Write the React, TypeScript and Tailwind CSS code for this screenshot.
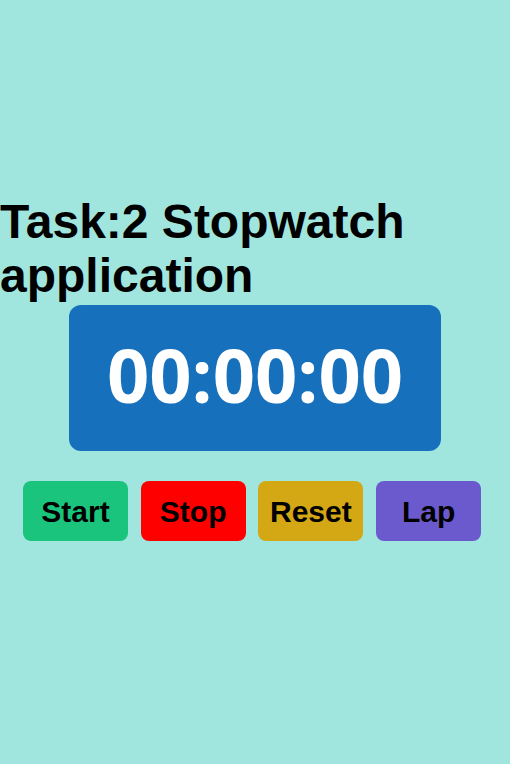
import { useEffect, useRef, useState } from 'react'

function pad(n: number) {
  return n.toString().padStart(2, '0')
}

export default function App() {
  const [ticks, setTicks] = useState(0) // hundredths
  const [running, setRunning] = useState(false)
  const [laps, setLaps] = useState<number[]>([])
  const timer = useRef<number | null>(null)

  useEffect(() => {
    if (!running) return
    timer.current = window.setInterval(() => setTicks((t) => t + 1), 10)
    return () => {
      if (timer.current) clearInterval(timer.current)
    }
  }, [running])

  const mins = Math.floor(ticks / 6000)
  const secs = Math.floor(ticks / 100) % 60
  const hund = ticks % 100

  return (
    <div className="min-h-screen bg-[#a0e6de] pt-[195px] font-['Liberation_Sans',Arial,sans-serif]">
      <h1 className="text-[48px] leading-[54px] font-bold text-black">Task:2 Stopwatch application</h1>

      <div className="mx-auto mt-[2px] w-[372px] h-[146px] pb-[6px] rounded-[12px] bg-[#1670bc] flex items-center justify-center">
        <span className="text-white text-[74px] font-bold font-['Open_Sans',sans-serif] leading-none">
          {pad(mins)}:{pad(secs)}:{pad(hund)}
        </span>
      </div>

      <div className="mt-[30px] pl-[23px] flex gap-[12.7px]">
        <button
          onClick={() => setRunning(true)}
          className="w-[105px] h-[60px] rounded-[8px] bg-[#1bc47d] text-[30px] font-bold text-black"
        >
          Start
        </button>
        <button
          onClick={() => setRunning(false)}
          className="w-[105px] h-[60px] rounded-[8px] bg-[#ff0000] text-[30px] font-bold text-black"
        >
          Stop
        </button>
        <button
          onClick={() => {
            setRunning(false)
            setTicks(0)
            setLaps([])
          }}
          className="w-[105px] h-[60px] rounded-[8px] bg-[#d4a714] text-[30px] font-bold text-black"
        >
          Reset
        </button>
        <button
          onClick={() => setLaps((l) => [...l, ticks])}
          className="w-[105px] h-[60px] rounded-[8px] bg-[#6a5acd] text-[30px] font-bold text-black"
        >
          Lap
        </button>
      </div>

      {laps.length > 0 && (
        <ul className="mt-4 text-center text-lg">
          {laps.map((l, i) => (
            <li key={i}>
              Lap {i + 1}: {pad(Math.floor(l / 6000))}:{pad(Math.floor(l / 100) % 60)}:{pad(l % 100)}
            </li>
          ))}
        </ul>
      )}
    </div>
  )
}
